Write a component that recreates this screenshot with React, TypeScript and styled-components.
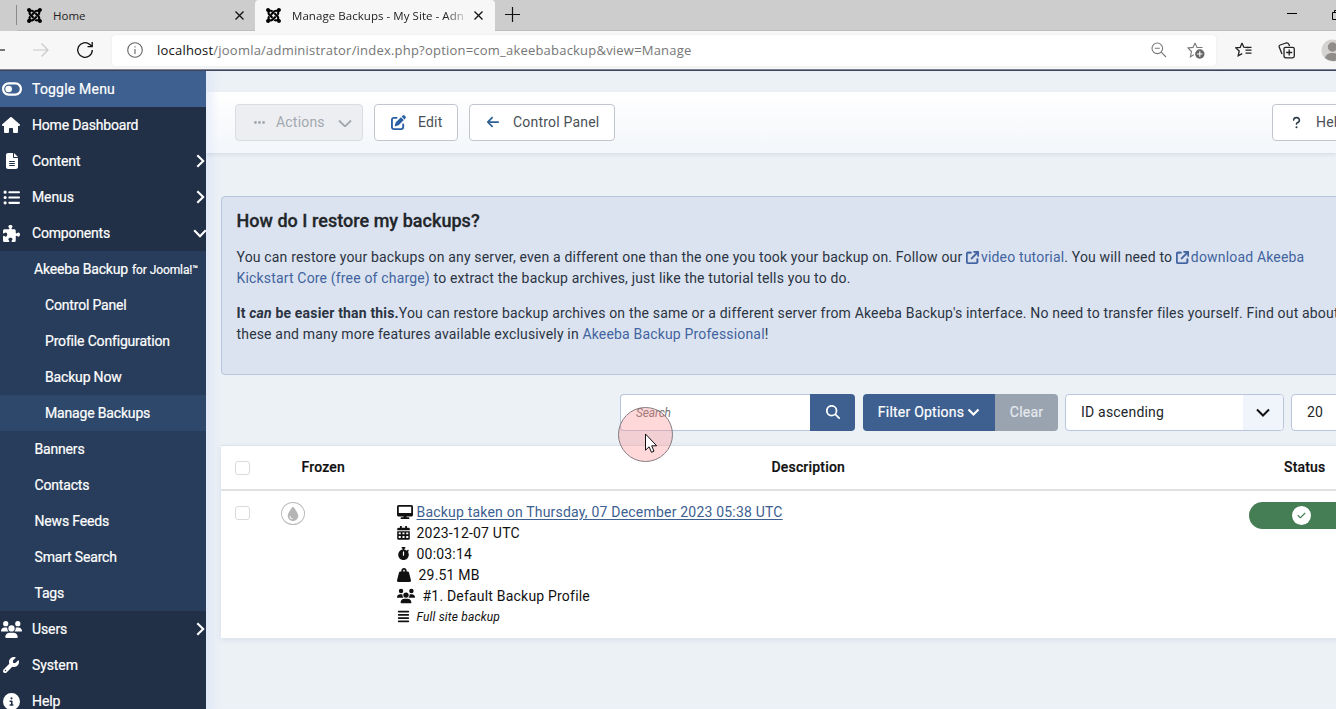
import React from "react";
import styled, { createGlobalStyle } from "styled-components";
import { FaJoomla } from "react-icons/fa";
import {
  FaHouse, FaFileLines, FaListUl, FaWrench, FaCircleInfo, FaEllipsis,
  FaPenToSquare, FaArrowLeft, FaQuestion, FaArrowUpRightFromSquare, FaDesktop, FaStopwatch,
  FaWeightHanging, FaAlignJustify, FaCheck, FaToggleOff, FaPuzzlePiece, FaUsers, FaDroplet, FaMagnifyingGlass,
} from "react-icons/fa6";

const Global = createGlobalStyle`
  *{box-sizing:border-box}
  html,body{margin:0;padding:0;overflow:hidden}
  body{font-family:Roboto,"Liberation Sans",sans-serif;font-size:14px;color:#22262a}
  svg{display:block;flex:none}
`;
const Window = styled.div`width:1336px;height:709px;overflow:hidden;display:flex;flex-direction:column;background:#ecf1f6;position:relative;`;

/* Browser chrome */
const TabStrip = styled.div`height:31px;flex:none;display:flex;background:#cdcdcd;font:11.5px "Open Sans","Noto Sans",sans-serif;color:#222;`;
const Tab = styled.div<{ $active?: boolean; $w: number }>`
  width:${p => p.$w}px;height:31px;display:flex;align-items:center;flex:none;
  padding:${p => (p.$active ? "0 12px 1px 10px" : "0 11px 0 9px")};
  background:${p => (p.$active ? "#f7f7f7" : "transparent")};
  border-radius:${p => (p.$active ? "4px 4px 0 0" : "0")};
  border-bottom:${p => (p.$active ? "0" : "1px solid #bdbdbd")};
`;
const TabEdge = styled.div`width:17px;border-right:1px solid #8b8b8b;height:20px;margin-top:5px;flex:none;`;
const TabTitle = styled.span<{ $fade?: boolean }>`
  flex:1;margin-left:10px;white-space:nowrap;overflow:hidden;
  ${p => p.$fade && "margin-right:8px;letter-spacing:.05px;mask-image:linear-gradient(90deg,#000 88%,transparent 102%);"}
`;
const StripRest = styled.div`flex:1;display:flex;align-items:center;padding:0 0 1px 10px;border-bottom:1px solid #bdbdbd;`;
const WinButtons = styled.div`margin-left:auto;display:flex;align-items:center;gap:35px;width:49px;overflow:hidden;height:20px;`;
const AddressRow = styled.div`height:38px;flex:none;display:flex;align-items:center;background:#f7f7f7;overflow:hidden;`;
const NavButtons = styled.div`width:112px;flex:none;display:flex;align-items:center;`;
const UrlField = styled.div`
  width:1104px;height:31px;flex:none;border-radius:4px;background:#fff;display:flex;align-items:center;padding:0 11px 0 15px;
  font:13px "Open Sans","Noto Sans",sans-serif;color:#767676;box-shadow:0 0 2px #e4e4e4;
`;
const Url = styled.span`margin-left:14px;flex:1;white-space:nowrap;letter-spacing:.21px;b{font-weight:400;color:#111}`;
const UrlTools = styled.div`display:flex;align-items:center;gap:20px;`;
const Toolbox = styled.div`display:flex;align-items:center;margin-left:19px;gap:25px;`;
const Rule = styled.div`height:2px;flex:none;background:linear-gradient(#9ba4b4,#23243a);`;

/* Page */
const Page = styled.div`flex:1;display:flex;min-height:0;`;
const Sidebar = styled.nav`width:206px;flex:none;background:#213047;color:#fff;letter-spacing:-.17px;overflow:hidden;`;
const NavRow = styled.div<{ $bg?: string }>`
  height:36px;display:flex;align-items:center;background:${p => p.$bg || "transparent"};
  -webkit-text-stroke:.2px #fff;white-space:nowrap;
`;
const NavIcon = styled.span<{ $left?: number }>`width:32px;padding-left:${p => p.$left ?? 2}px;flex:none;`;
const NavLabel = styled.span<{ $ls?: number }>`letter-spacing:${p => p.$ls ?? -0.1}px;`;
const NavArrow = styled.span<{ $pull: number }>`margin-left:auto;margin-right:${p => p.$pull}px;`;
const SubMenu = styled.div`background:#283d5b;`;
const SubRow = styled(NavRow)<{ $indent: number }>`
  padding-left:${p => p.$indent}px;
  small{font-size:12px;letter-spacing:-.1px;margin:1px 0 0 4px}
  sup{font-size:9px;line-height:0;vertical-align:2px;letter-spacing:0}
`;

const Main = styled.main`flex:1;min-width:0;overflow:hidden;display:flex;flex-direction:column;box-shadow:inset 13px 0 12px -8px #dfe7f8;`;
const Subhead = styled.div`
  height:61px;margin-top:21px;flex:none;display:flex;align-items:center;padding:0 0 0 29px;
  background:linear-gradient(90deg,#e9eefa 0,transparent 13px),linear-gradient(#ffffff,#f3f6fa);box-shadow:0 2px 4px rgba(30,50,80,.09);
`;
const Button = styled.button<{ $w: number; $pad: number; $disabled?: boolean }>`
  width:${p => p.$w}px;height:37px;flex:none;display:flex;align-items:center;padding:0 0 1px ${p => p.$pad}px;margin-right:11px;
  background:${p => (p.$disabled ? "#eceef2" : "#fff")};border:1px solid ${p => (p.$disabled ? "#d9dde2" : "#c1c5cd")};
  border-radius:4px;color:${p => (p.$disabled ? "#a3a8ae" : "#495057")};font:14px Roboto,sans-serif;letter-spacing:.2px;white-space:nowrap;
`;
const Label = styled.span<{ $gap: number }>`margin-left:${p => p.$gap}px;`;
const Alert = styled.section`
  width:1150px;height:179px;flex:none;margin:43px 0 0 15px;border:1px solid #b5c5dc;border-radius:4px;background:#dce3f0;
  padding:11px 14.5px;color:#2b3442;letter-spacing:.17px;line-height:21px;
  h3{margin:0 0 14px;font-size:18px;line-height:25px;font-weight:500;letter-spacing:.03px;color:#22262a;-webkit-text-stroke:.3px #22262a}
  p{margin:0 0 14px;white-space:nowrap}
  a{color:#41639f}
  a svg{display:inline-block;vertical-align:-1.5px;margin-right:2px;stroke:currentColor;stroke-width:14px}
`;
const Filters = styled.div`display:flex;flex:none;height:37px;margin:19px 0 14px 414px;`;
const SearchInput = styled.div`width:190px;flex:none;border:1px solid #b9c5dc;border-right:0;border-radius:4px 0 0 4px;background:#fff;padding:0 15px;font-size:12px;letter-spacing:-.15px;font-style:italic;line-height:36px;color:#777;`;
const Solid = styled.button<{ $w: number; $r: string; $muted?: boolean; $left?: number }>`
  width:${p => p.$w}px;margin-left:${p => p.$left ?? 0}px;flex:none;border:0;border-radius:${p => p.$r};background:${p => (p.$muted ? "#9aa4b1" : "#3d6090")};
  color:${p => (p.$muted ? "#e6eaee" : "#fff")};display:flex;align-items:center;justify-content:center;gap:3px;
  font:14px Roboto,sans-serif;letter-spacing:.22px;-webkit-text-stroke:.2px currentColor;padding:0 0 1px;
`;
const Select = styled.div<{ $w: number }>`
  width:${p => p.$w}px;flex:none;margin-left:7px;border:1px solid #b9c5dc;border-radius:4px;background:#fff;display:flex;align-items:center;
  padding-left:15px;color:#22262a;letter-spacing:.2px;overflow:hidden;line-height:34px;
`;
const SelectText = styled.span`padding-bottom:1px;`;
const SelectArrow = styled.span`width:40px;height:100%;margin-left:auto;background:#f0f4fb;display:flex;align-items:center;justify-content:center;`;

const Table = styled.div`margin-left:15px;width:1150px;height:193px;flex:none;background:#fff;color:#111;border-top:1px solid #dce2e9;box-shadow:0 2px 6px rgba(40,70,120,.09);`;
const Row = styled.div<{ $head?: boolean }>`
  display:grid;grid-template-columns:60px 115.5px 823.5px 1fr;
  ${p => p.$head ? "height:45px;align-items:center;border-bottom:2px solid #dfe1e3;font-weight:500;letter-spacing:.18px;-webkit-text-stroke:.2px #111;" : "padding-top:10px;"}
`;
const Check = styled.span<{ $top: number }>`display:block;width:15px;height:14px;border:1px solid #d8dadd;border-radius:3px;margin:${p => p.$top}px 0 0 14px;`;
const HeadCell = styled.span<{ $left: number }>`padding:0 0 2px ${p => p.$left}px;`;
const Drop = styled.span`width:24px;height:23px;margin-top:1px;border:1px solid #b9bbbd;border-radius:50%;display:flex;align-items:center;justify-content:center;color:#b5b5b5;`;
const Details = styled.div`letter-spacing:.2px;`;
const Detail = styled.div<{ $gap: number; $small?: boolean }>`
  height:21px;display:flex;align-items:center;gap:${p => p.$gap}px;color:#111;
  ${p => p.$small && "font-size:12px;font-style:italic;letter-spacing:.16px;line-height:13px;"}
  a{color:#3d6090;text-decoration:underline;text-underline-offset:2px}
`;
const Note = styled.span`padding-top:2px;`;
const Badge = styled.div`margin:1px 0 0 29px;width:104px;height:27px;border-radius:14px;background:#457d54;display:flex;justify-content:center;align-items:center;`;
const Tick = styled.span`width:19px;height:19px;margin-left:1px;border-radius:50%;background:#fff;color:#457d54;display:flex;align-items:center;justify-content:center;`;

const Halo = styled.div`position:absolute;left:618px;top:407px;width:55px;height:55px;border:1px solid #857c82;border-radius:50%;background:rgba(255,130,130,.3);`;
const Pointer = styled.svg`position:absolute;left:644px;top:433px;`;
const Reload = styled.svg`margin-left:27px;`;
const HelpSlot = styled.div`margin-left:auto;margin-right:-37px;`;

const Stroke = ({ w, h, d, color = "#222", sw = 1.2 }: { w: number; h: number; d: string; color?: string; sw?: number }) => (
  <svg width={w} height={h} viewBox={`0 0 ${w} ${h}`} fill="none" stroke={color} strokeWidth={sw}><path d={d} /></svg>
);
const Close = () => <Stroke w={9} h={9} d="M.5.5 8.5 8.5M8.5.5.5 8.5" color="#111" sw={1.3} />;
const Calendar = () => (
  <svg width="13" height="14" viewBox="0 0 13 14"><path fill="#111" fillRule="evenodd" d="M3 0H4.8V1.8H8.2V0H10V1.8H11.6Q12.8 1.8 12.8 3V4.3H.2V3Q.2 1.8 1.4 1.8H3ZM.2 5.2H12.8V12.6Q12.8 13.8 11.6 13.8H1.4Q.2 13.8 .2 12.6ZM1.7 6.6V8.2H3.8V6.6ZM5.5 6.6V8.2H7.5V6.6ZM9.2 6.6V8.2H11.3V6.6ZM1.7 10V12H3.8V10ZM5.5 10V12H7.5V10ZM9.2 10V12H11.3V10Z" /></svg>
);
const STAR = "M7 1 8.8 5.2 13.5 5.6M7 1 5.2 5.4.8 5.9 4.2 9 3.2 13.8 7.2 11.6";

type Entry = { icon: React.ReactNode; text: string; arrow?: string; bg?: string; left?: number; ls?: number };
const before: Entry[] = [
  { icon: <FaHouse size={18} />, text: "Home Dashboard", ls: -0.18 },
  { icon: <FaFileLines size={16} />, text: "Content", arrow: "right", left: 4 },
  { icon: <FaListUl size={17} />, text: "Menus", arrow: "right", left: 3 },
  { icon: <FaPuzzlePiece size={17} />, text: "Components", arrow: "down", left: 3, ls: -0.2 },
];
const after: Entry[] = [
  { icon: <FaUsers size={21} />, text: "Users", arrow: "right", left: 1 },
  { icon: <FaWrench size={16} />, text: "System", left: 3 },
  { icon: <FaCircleInfo size={17} />, text: "Help", left: 3 },
];
const Item = ({ icon, text, arrow, bg, left, ls }: Entry) => (
  <NavRow $bg={bg}>
    <NavIcon $left={left}>{icon}</NavIcon><NavLabel $ls={ls}>{text}</NavLabel>
    {arrow === "right" && <NavArrow $pull={1}><Stroke w={9} h={14} d="M1.3 1.2 7.2 7 1.3 12.8" color="#fff" sw={2.1} /></NavArrow>}
    {arrow === "down" && <NavArrow $pull={-1}><Stroke w={14} h={9} d="M1.2 1.3 7 7.2 12.8 1.3" color="#fff" sw={2.1} /></NavArrow>}
  </NavRow>
);

export default function App() {
  return (
    <Window>
      <Global />
      <TabStrip>
        <TabEdge />
        <Tab $w={238}><FaJoomla size={17} color="#000" /><TabTitle>Home</TabTitle><Close /></Tab>
        <Tab $w={240} $active><FaJoomla size={17} color="#000" /><TabTitle $fade>Manage Backups - My Site - Adn</TabTitle><Close /></Tab>
        <StripRest>
          <Stroke w={15} h={15} d="M7.5 0V15M0 7.5H15" color="#111" />
          <WinButtons><Stroke w={10} h={10} d="M0 3.5H10" color="#000" sw={1} /><Stroke w={10} h={10} d="M.5 2.5H7.5V9.5H.5ZM2.5 2V.5H9.5V7.5H8" color="#000" sw={1} /></WinButtons>
        </StripRest>
      </TabStrip>
      <AddressRow>
        <NavButtons>
          <Stroke w={33} h={16} d="M0 8H5" />
          <Stroke w={16} h={16} d="M0 8H15M8.5 1.5 15 8 8.5 14.5" color="#c9c9c9" />
          <Reload width="18" height="18" viewBox="0 0 18 18" fill="none" stroke="#111" strokeWidth="1.3"><path d="M16.3 9A7.3 7.3 0 1 1 13.8 3.5L16 5.5M16.2 1V5.7H11.5" /></Reload>
        </NavButtons>
        <UrlField>
          <svg width="16" height="16" viewBox="0 0 16 16" fill="none" stroke="#666" strokeWidth="1.1"><circle cx="8" cy="8" r="7.3" /><path d="M8 7V12M8 4.2V5.6" /></svg>
          <Url><b>localhost</b>/joomla/administrator/index.php?option=com_akeebabackup&amp;view=Manage</Url>
          <UrlTools>
            <svg width="16" height="16" viewBox="0 0 16 16" fill="none" stroke="#777" strokeWidth="1.1"><circle cx="6.3" cy="6.3" r="5.3" /><path d="M10.2 10.2 15 15M3.8 6.3H8.8" /></svg>
            <svg width="18" height="17" viewBox="0 0 18 17" fill="none" stroke="#777" strokeWidth="1.1"><path d="M8 1 10 5.5H15.5M8 1 6 5.4 1 6 4.5 9.5 3.4 14.8 7 12.6" /><circle cx="12.8" cy="12" r="4.7" fill="#666" stroke="none" /><path d="M12.8 9.3V14.7M10.1 12H15.5" stroke="#fff" /></svg>
          </UrlTools>
        </UrlField>
        <Toolbox>
          <svg width="18" height="16" viewBox="0 0 18 16" fill="none" stroke="#222" strokeWidth="1.3"><path d={STAR} /><path d="M10.5 8.2H16.5M10.5 11.2H16.5M12 5.4H16.5" /></svg>
          <svg width="18" height="17" viewBox="0 0 18 17" fill="none" stroke="#222" strokeWidth="1.3"><path d="M4 12 1.2 5Q.8 3.6 2.2 3L8 1Q10 .5 11 2.5L11.5 4M6 6.5Q6 5.3 7.5 5.3H14.5Q16.3 5.3 16.3 7V14Q16.3 15.8 14.5 15.8H8Q6 15.8 6 14ZM11.2 7.5V13.5M8.2 10.5H14.2" /></svg>
          <svg width="23" height="23" viewBox="0 0 23 23"><circle cx="11.5" cy="11.5" r="11" fill="#d5d3d1" /><circle cx="11.5" cy="8" r="4.7" fill="#8f8c89" /><path d="M4 19Q5 14 11.5 14T19 19Q12 25 4 19" fill="#8f8c89" /></svg>
        </Toolbox>
      </AddressRow>
      <Rule />
      <Page>
        <Sidebar>
          <Item bg="#3d6090" icon={<FaToggleOff size={20} />} text="Toggle Menu" ls={0.2} />
          {before.map(i => <Item key={i.text} {...i} />)}
          <SubMenu>
            <SubRow $indent={34}>Akeeba Backup<small>for Joomla!<sup>™</sup></small></SubRow>
            {["Control Panel", "Profile Configuration", "Backup Now", "Manage Backups"].map(t => (
              <SubRow key={t} $indent={45} $bg={t === "Manage Backups" ? "#2e486b" : undefined}>{t}</SubRow>
            ))}
            {["Banners", "Contacts", "News Feeds", "Smart Search", "Tags"].map(t => <SubRow key={t} $indent={34.5}>{t}</SubRow>)}
          </SubMenu>
          {after.map(i => <Item key={i.text} {...i} />)}
        </Sidebar>
        <Main>
          <Subhead>
            <Button $w={128} $pad={17} $disabled><FaEllipsis size={13} /><Label $gap={10}>Actions</Label><Label $gap={13}><Stroke w={14} h={9} d="M1 2.5 7 8.5 13 2.5" color="#a3a8ae" sw={1.8} /></Label></Button>
            <Button $w={84} $pad={16}><FaPenToSquare size={15} color="#2a5fa5" /><Label $gap={12}>Edit</Label></Button>
            <Button $w={146} $pad={16}><FaArrowLeft size={14} color="#2f6093" /><Label $gap={13}>Control Panel</Label></Button>
            <HelpSlot><Button $w={90} $pad={17}><FaQuestion size={13} color="#2c3a4c" /><Label $gap={13}>Help</Label></Button></HelpSlot>
          </Subhead>
          <Alert>
            <h3>How do I restore my backups?</h3>
            <p>You can restore your backups on any server, even a different one than the one you took your backup on. Follow our <a><FaArrowUpRightFromSquare size={13} />video tutorial</a>. You will need to <a><FaArrowUpRightFromSquare size={13} />download Akeeba<br />Kickstart Core (free of charge)</a> to extract the backup archives, just like the tutorial tells you to do.</p>
            <p><b>It <i>can</i> be easier than this.</b>You can restore backup archives on the same or a different server from Akeeba Backup's interface. No need to transfer files yourself. Find out about<br />these and many more features available exclusively in <a>Akeeba Backup Professional</a>!</p>
          </Alert>
          <Filters>
            <SearchInput>Search</SearchInput>
            <Solid $w={45} $r="0 4px 4px 0"><FaMagnifyingGlass size={14} /></Solid>
            <Solid $w={132} $left={8} $r="4px 0 0 4px">Filter Options<Stroke w={13} h={9} d="M1.5 1.5 6.5 6.5 11.5 1.5" color="#fff" sw={2.2} /></Solid>
            <Solid $w={63} $r="0 4px 4px 0" $muted>Clear</Solid>
            <Select $w={219}><SelectText>ID ascending</SelectText><SelectArrow><Stroke w={14} h={9} d="M1 1.5 7 7.5 13 1.5" color="#111" sw={2} /></SelectArrow></Select>
            <Select $w={90}><SelectText>20</SelectText></Select>
          </Filters>
          <Table>
            <Row $head><Check $top={0} /><HeadCell $left={20.5}>Frozen</HeadCell><HeadCell $left={375}>Description</HeadCell><HeadCell $left={64}>Status</HeadCell></Row>
            <Row>
              <Check $top={5} />
              <Drop><FaDroplet size={14} /></Drop>
              <Details>
                <Detail $gap={4}><FaDesktop size={16} /><a>Backup taken on Thursday, 07 December 2023 05:38 UTC</a></Detail>
                <Detail $gap={7}><Calendar />2023-12-07 UTC</Detail>
                <Detail $gap={7}><FaStopwatch size={13} />00:03:14</Detail>
                <Detail $gap={8}><FaWeightHanging size={14} />29.51 MB</Detail>
                <Detail $gap={8}><FaUsers size={18} />#1. Default Backup Profile</Detail>
                <Detail $gap={7} $small><FaAlignJustify size={13} /><Note>Full site backup</Note></Detail>
              </Details>
              <Badge><Tick><FaCheck size={9} /></Tick></Badge>
            </Row>
          </Table>
        </Main>
      </Page>
      <Halo />
      <Pointer width="14" height="22" viewBox="0 0 14 22"><path d="M1.5 1V17.2L5.1 13.8 7.5 19.3 10 18.2 7.7 12.8H12.7Z" fill="#fff" stroke="#111" /></Pointer>
    </Window>
  );
}
